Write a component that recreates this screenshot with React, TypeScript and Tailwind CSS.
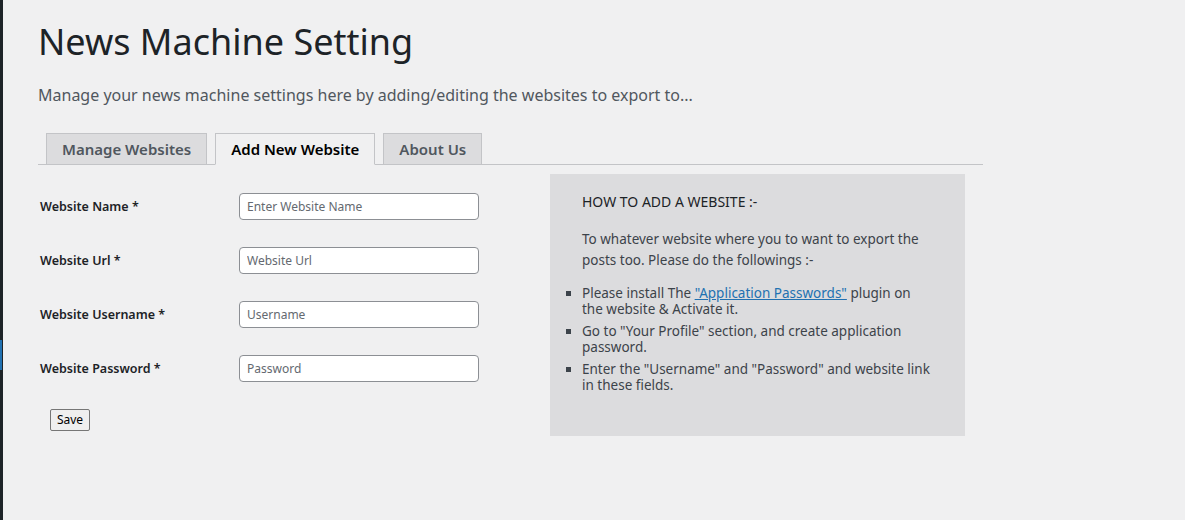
const font = { fontFamily: '"Noto Sans", "Open Sans", sans-serif' };

type Field = { label: string; placeholder: string };

const fields: Field[] = [
  { label: 'Website Name', placeholder: 'Enter Website Name' },
  { label: 'Website Url', placeholder: 'Website Url' },
  { label: 'Website Username', placeholder: 'Username' },
  { label: 'Website Password', placeholder: 'Password' },
];

function Tab({ label, active }: { label: string; active?: boolean }) {
  return (
    <div
      className={
        'h-[32px] -mb-px flex items-center px-[15px] border border-[#c3c4c7] text-[15px] font-semibold ' +
        (active ? 'bg-[#f0f0f1] text-black border-b-[#f0f0f1]' : 'bg-[#dcdcde] text-[#50575e]')
      }
    >
      {label}
    </div>
  );
}

export default function App() {
  return (
    <div className="w-[1185px] h-[520px] bg-[#f0f0f1] flex overflow-hidden" style={font}>
      <div className="w-[3px] bg-[#1d2327] shrink-0 flex flex-col">
        <div className="h-[340px]" />
        <div className="h-[30px] w-[2px] bg-[#2271b1]" />
      </div>
      <div className="pl-[35px] pt-[18px] flex-1">
        <h1 className="text-[36px] leading-[48px] text-[#1d2327]">News Machine Setting</h1>
        <p className="mt-[17px] text-[16px] text-[#50575e]">
          Manage your news machine settings here by adding/editing the websites to export to...
        </p>
        <div className="mt-[26px] w-[945px] border-b border-[#c3c4c7] flex gap-[8px] pl-[8px]">
          <Tab label="Manage Websites" />
          <Tab label="Add New Website" active />
          <Tab label="About Us" />
        </div>
        <div className="flex mt-[9px]">
          <div className="w-[512px] pt-[19px]">
            {fields.map((f) => (
              <div key={f.label} className="flex items-center h-[27px] mb-[27px]">
                <label className="w-[201px] pl-[2px] pt-[2px] text-[12.5px] font-semibold text-[#1d2327]">
                  {f.label} *
                </label>
                <input
                  className="w-[240px] h-[27px] bg-white border border-[#8c8f94] rounded-[4px] px-[7px] text-[12px] text-[#2c3338] placeholder:text-[#646970] outline-none"
                  placeholder={f.placeholder}
                  style={font}
                />
              </div>
            ))}
            <button className="block ml-[12px] h-[22px] w-[40px] border border-[#767676] rounded-[2px] bg-[#efefef] text-[12px] text-black leading-none">
              Save
            </button>
          </div>
          <div className="w-[415px] h-[262px] bg-[#dcdcde] pl-[32px] pr-[30px] pt-[17px] text-[13.5px] text-[#3c434a]">
            <div className="text-[14px] text-[#1d2327]">HOW TO ADD A WEBSITE :-</div>
            <p className="mt-[17px] leading-[21px]">
              To whatever website where you to want to export the posts too. Please do the followings :-
            </p>
            <ul className="mt-[14px] leading-[16px] list-[square] pl-0 pr-[4px] marker:text-[#3c434a]">
              <li className="mb-[6px]">
                Please install The{' '}
                <a className="text-[#2271b1] underline" href="#">
                  "Application Passwords"
                </a>{' '}
                plugin on the website &amp; Activate it.
              </li>
              <li className="mb-[6px]">Go to "Your Profile" section, and create application password.</li>
              <li>Enter the "Username" and "Password" and website link in these fields.</li>
            </ul>
          </div>
        </div>
      </div>
    </div>
  );
}
